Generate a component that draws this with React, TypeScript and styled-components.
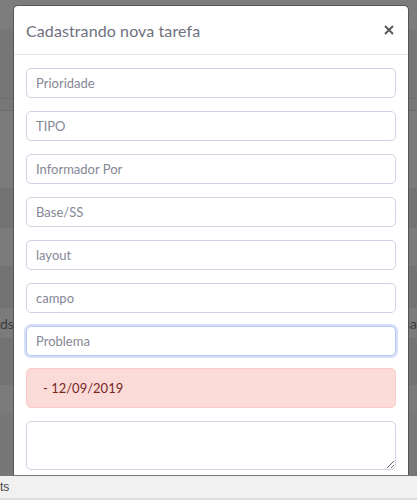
import React from "react";
import styled, { createGlobalStyle } from "styled-components";

const Global = createGlobalStyle`
  html, body { margin: 0; padding: 0; }
  body { width: 417px; height: 500px; overflow: hidden; font-family: Lato, "Open Sans", sans-serif; }
  * { box-sizing: border-box; }
`;

const Page = styled.div`
  position: relative;
  width: 417px;
  height: 500px;
  display: flex;
  flex-direction: column;
  background: #777777;
`;

const Backdrop = styled.div`
  flex: 1;
  display: flex;
  flex-direction: column;
`;

const Band = styled.div<{ $h: number; $bg: string; $line?: boolean }>`
  height: ${(p) => p.$h}px;
  background: ${(p) => p.$bg};
  border-bottom: ${(p) => (p.$line ? "1px solid #6c6c6c" : "none")};
  display: flex;
  align-items: center;
  justify-content: space-between;
  font-size: 14px;
  color: #3b3b3b;
  overflow: hidden;
`;

const CellText = styled.span`
  white-space: nowrap;
`;

const Footer = styled.div`
  height: 24px;
  background: #f1f1f1;
  border-bottom: 2px solid #dedede;
  display: flex;
  align-items: center;
  font-size: 12px;
  color: #444;
  font-family: "Liberation Sans", Arial, sans-serif;
`;

const Modal = styled.div`
  position: absolute;
  top: 5px;
  left: 13px;
  width: 396px;
  height: 470px;
  background: #fff;
  border: 1px solid #555;
  border-bottom: none;
  border-radius: 5px 5px 0 0;
  overflow: hidden;
  display: flex;
  flex-direction: column;
`;

const Header = styled.div`
  height: 49px;
  flex-shrink: 0;
  display: flex;
  align-items: center;
  justify-content: space-between;
  padding: 0 12px 0 12px;
  border-bottom: 1px solid #e3e6f0;
`;

const Title = styled.h5`
  margin: 0;
  font-size: 16px;
  font-weight: 400;
  color: #6e707e;
  letter-spacing: 0.1px;
`;

const Close = styled.button`
  border: none;
  background: none;
  padding: 0;
  width: 12px;
  height: 12px;
  display: flex;
  align-items: center;
  justify-content: center;
  margin-right: 1px;
  cursor: pointer;
`;

const Body = styled.div`
  padding: 13px 12px;
  display: flex;
  flex-direction: column;
  gap: 13px;
`;

const Input = styled.input<{ $focus?: boolean }>`
  height: 30px;
  width: 100%;
  border: 1px solid ${(p) => (p.$focus ? "#bac8f3" : "#d1d3e2")};
  box-shadow: ${(p) => (p.$focus ? "0 0 0 2px rgba(78,115,223,0.22)" : "none")};
  border-radius: 5px;
  padding: 0 9px;
  font-family: Lato, "Open Sans", sans-serif;
  font-size: 13px;
  color: #6e707e;
  outline: none;
  &::placeholder { color: #858796; opacity: 1; }
`;

const Alert = styled.div`
  height: 40px;
  margin-top: -1px;
  background: #fadbd8;
  border: 1px solid #f8ccc8;
  border-radius: 5px;
  color: #78261f;
  font-size: 13px;
  display: flex;
  align-items: center;
  padding-left: 16px;
`;

const TextArea = styled.textarea`
  height: 49px;
  width: 100%;
  border: 1px solid #d1d3e2;
  border-radius: 5px;
  resize: vertical;
  font-family: Lato, sans-serif;
  outline: none;
`;

const fields = ["Prioridade", "TIPO", "Informador Por", "Base/SS", "layout", "campo"];

const bands: { h: number; bg: string; line?: boolean; text?: boolean }[] = [
  { h: 29, bg: "#7d7d7d" },
  { h: 70, bg: "#767676", line: true },
  { h: 12, bg: "#777777", line: true },
  { h: 77, bg: "#7b7b7b" },
  { h: 40, bg: "#737373" },
  { h: 38, bg: "#7b7b7b" },
  { h: 42, bg: "#737373" },
  { h: 30, bg: "#7b7b7b", text: true },
  { h: 47, bg: "#737373" },
  { h: 28, bg: "#7b7b7b" },
  { h: 63, bg: "#777777" },
];

export default function App() {
  return (
    <>
      <Global />
      <Page>
        <Backdrop>
          {bands.map((b, i) => (
            <Band key={i} $h={b.h} $bg={b.bg} $line={b.line}>
              {b.text && (
                <>
                  <CellText>dsa</CellText>
                  <CellText>dsa</CellText>
                </>
              )}
            </Band>
          ))}
        </Backdrop>
        <Footer>
          <CellText>ts</CellText>
        </Footer>
        <Modal>
          <Header>
            <Title>Cadastrando nova tarefa</Title>
            <Close aria-label="Fechar">
              <svg width="10" height="10" viewBox="0 0 10 10">
                <path d="M1 1 L9 9 M9 1 L1 9" stroke="#5a5a5a" strokeWidth="2" />
              </svg>
            </Close>
          </Header>
          <Body>
            {fields.map((f) => (
              <Input key={f} placeholder={f} />
            ))}
            <Input placeholder="Problema" $focus />
            <Alert>- 12/09/2019</Alert>
            <TextArea />
          </Body>
        </Modal>
      </Page>
    </>
  );
}
